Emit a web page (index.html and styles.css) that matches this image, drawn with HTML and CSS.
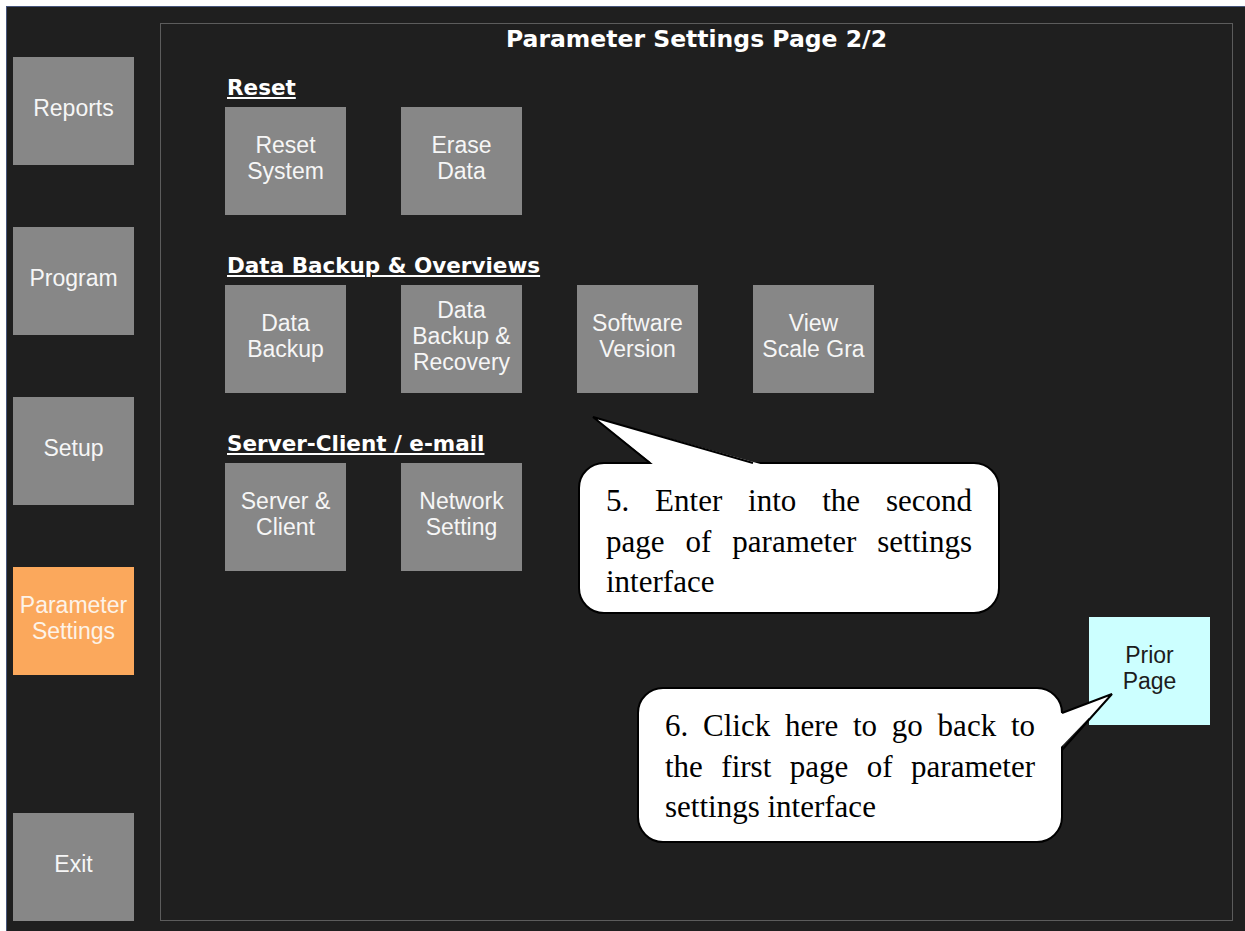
FILE: index.html
```html
<!DOCTYPE html>
<html lang="en">
<head>
  <meta charset="UTF-8" />
  <title>Parameter Settings Page 2/2</title>
  <link rel="stylesheet" href="styles.css">
</head>
<body>
  <div class="screen">
    <nav class="sidebar">
      <div class="key">Reports</div>
      <div class="key">Program</div>
      <div class="key">Setup</div>
      <div class="key key-active">Parameter<br>Settings</div>
      <div class="key key-exit">Exit</div>
    </nav>

    <main class="panel">
      <h1 class="panel-title">Parameter Settings Page 2/2</h1>

      <div class="groups">
        <section class="group">
          <h2 class="group-title">Reset</h2>
          <div class="group-keys">
            <div class="key">Reset<br>System</div>
            <div class="key">Erase<br>Data</div>
          </div>
        </section>

        <section class="group">
          <h2 class="group-title">Data Backup &amp; Overviews</h2>
          <div class="group-keys">
            <div class="key">Data<br>Backup</div>
            <div class="key">Data<br>Backup &amp;<br>Recovery</div>
            <div class="key">Software<br>Version</div>
            <div class="key">View<br>Scale Gra</div>
          </div>
        </section>

        <section class="group">
          <h2 class="group-title">Server-Client / e-mail</h2>
          <div class="group-keys">
            <div class="key">Server &amp;<br>Client</div>
            <div class="key">Network<br>Setting</div>
          </div>
        </section>
      </div>

      <div class="panel-foot">
        <div class="key key-prior">Prior<br>Page</div>
      </div>
    </main>
  </div>

  <!-- annotation bubbles laid over the screen -->
  <div class="callout callout-next">
    <svg class="tail tail-up" width="200" height="56" viewBox="0 0 200 56">
      <polygon points="76,53 15,5 186,53" fill="#fff" />
      <polyline points="72,51 15,5 175,51" fill="none" stroke="#000" stroke-width="2" />
    </svg>
    <span class="callout-line">5. Enter into the second</span>
    <span class="callout-line">page of parameter settings</span>
    <span class="callout-last">interface</span>
  </div>

  <div class="callout callout-back">
    <svg class="tail tail-right" width="60" height="70" viewBox="0 0 60 70">
      <polygon points="2,27 55,7 2,62" fill="#fff" />
      <polyline points="5,26 55,7 5,63" fill="none" stroke="#000" stroke-width="2" />
    </svg>
    <span class="callout-line">6. Click here to go back to</span>
    <span class="callout-line">the first page of parameter</span>
    <span class="callout-last">settings interface</span>
  </div>
</body>
</html>
```

FILE: styles.css
```css
* {
  box-sizing: border-box;
}

html, body {
  height: 100%;
  margin: 0;
}

body {
  background: #ffffff;
  padding: 6px 0 0 6px;
  font-family: "Liberation Sans", Arial, sans-serif;
}

.screen {
  height: 100%;
  display: flex;
  background: #1f1f1f;
  border-top: 1px solid #46557a;
  border-left: 1px solid #46557a;
  padding: 16px 12px 10px 6px;
}

/* left menu */
.sidebar {
  width: 121px;
  margin-right: 26px;
  padding-top: 34px;
  display: flex;
  flex-direction: column;
  gap: 62px;
}

.key {
  width: 121px;
  height: 108px;
  flex-shrink: 0;
  display: flex;
  align-items: center;
  justify-content: center;
  text-align: center;
  padding-bottom: 6px;
  background: #878787;
  color: #f6f6f6;
  font-size: 23px;
  line-height: 26px;
}

.key-active {
  background: #fba85c;
  color: #fdf3e8;
}

.key-exit {
  margin-top: auto;
}

.key-prior {
  background: #ccffff;
  color: #1c1c1c;
}

/* main frame */
.panel {
  flex: 1;
  display: flex;
  flex-direction: column;
  border: 1px solid #5c5c5c;
  padding-top: 2px;
}

.panel-title {
  margin: 0;
  text-align: center;
  font-family: "DejaVu Sans", sans-serif;
  font-weight: 700;
  font-size: 23.5px;
  line-height: 27px;
  color: #ffffff;
}

.groups {
  margin-top: 22px;
  padding-left: 64px;
  display: flex;
  flex-direction: column;
  gap: 38px;
}

.group-title {
  margin: 0 0 7px;
  padding-left: 2px;
  font-family: "DejaVu Sans", sans-serif;
  font-weight: 700;
  font-size: 21.5px;
  line-height: 25px;
  color: #ffffff;
  text-decoration: underline;
  text-decoration-thickness: 2px;
  text-underline-offset: 2px;
}

.group-keys {
  display: flex;
  gap: 55px;
}

.panel-foot {
  margin-top: 46px;
  padding-right: 22px;
  display: flex;
  justify-content: flex-end;
}

/* speech bubbles */
.callout {
  position: absolute;
  background: #ffffff;
  border: 2px solid #000000;
  border-radius: 26px;
  padding: 17px 26px 0;
  font-family: "Liberation Serif", "Times New Roman", serif;
  font-size: 31px;
  line-height: 40.5px;
  color: #000000;
}

.callout-line {
  display: block;
  text-align: justify;
  text-align-last: justify;
  white-space: nowrap;
}

.callout-last {
  display: block;
}

.callout-next {
  left: 578px;
  top: 462px;
  width: 422px;
  height: 152px;
}

.callout-back {
  left: 637px;
  top: 687px;
  width: 426px;
  height: 156px;
}

.tail {
  position: absolute;
  overflow: visible;
}

.tail-up {
  left: -2px;
  top: -52px;
}

.tail-right {
  left: 418px;
  top: -2px;
}
```
